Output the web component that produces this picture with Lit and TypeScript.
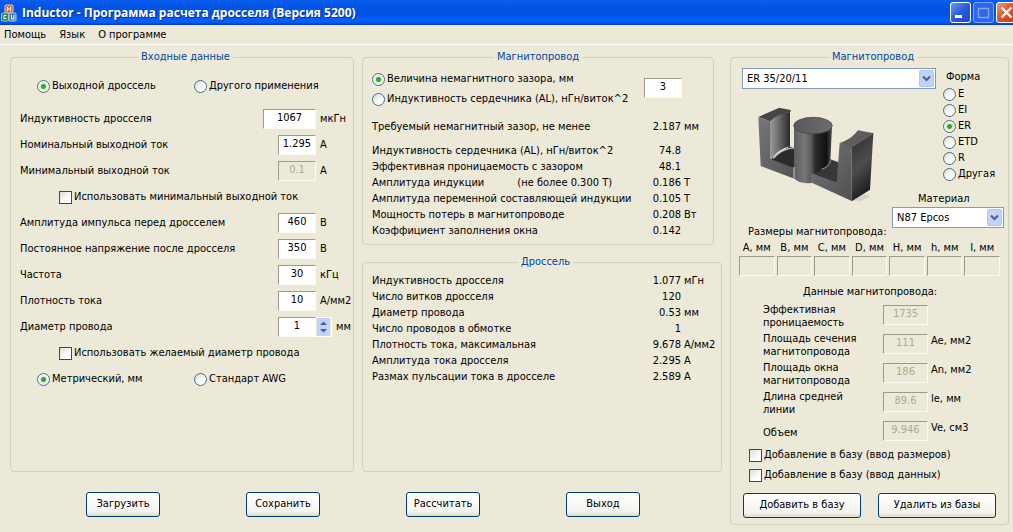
import { LitElement, html, css, svg, nothing } from 'lit';
import { customElement } from 'lit/decorators.js';

interface Field {
  id: string;
  label: string;
  value: string;
  unit: string;
  wide?: boolean;
  disabled?: boolean;
}

const pulseFields: Field[] = [
  { id: 'pulse', label: 'Амплитуда импульса перед дросселем', value: '460', unit: 'В' },
  { id: 'dc', label: 'Постоянное напряжение после дросселя', value: '350', unit: 'В' },
  { id: 'freq', label: 'Частота', value: '30', unit: 'кГц' },
  { id: 'density', label: 'Плотность тока', value: '10', unit: 'А/мм2' },
];

const currentFields: Field[] = [
  { id: 'ind', label: 'Индуктивность дросселя', value: '1067', unit: 'мкГн', wide: true },
  { id: 'nom', label: 'Номинальный выходной ток', value: '1.295', unit: 'А' },
  { id: 'min', label: 'Минимальный выходной ток', value: '0.1', unit: 'А', disabled: true },
];

type Result = [label: string, value: string, unit: string, note?: string];

const coreResults: Result[] = [
  ['Индуктивность сердечника (AL), нГн/виток^2', '74.8', ''],
  ['Эффективная проницаемость с зазором', '48.1', ''],
  ['Амплитуда индукции', '0.186', 'Т', '(не более 0.300 Т)'],
  ['Амплитуда переменной составляющей индукции', '0.105', 'Т'],
  ['Мощность потерь в магнитопроводе', '0.208', 'Вт'],
  ['Коэффициент заполнения окна', '0.142', ''],
];

const chokeResults: Result[] = [
  ['Индуктивность дросселя', '1.077', 'мГн'],
  ['Число витков дросселя', '120', ''],
  ['Диаметр провода', '0.53', 'мм'],
  ['Число проводов в обмотке', '1', ''],
  ['Плотность тока, максимальная', '9.678', 'А/мм2'],
  ['Амплитуда тока дросселя', '2.295', 'А'],
  ['Размах пульсации тока в дросселе', '2.589', 'А'],
];

const shapes = ['E', 'EI', 'ER', 'ETD', 'R', 'Другая'];
const dimensions = ['A', 'B', 'C', 'D', 'H', 'h', 'I'];

const coreData: Field[] = [
  { id: 'perm', label: 'Эффективная проницаемость', value: '1735', unit: '' },
  { id: 'ae', label: 'Площадь сечения магнитопровода', value: '111', unit: 'Ae, мм2' },
  { id: 'an', label: 'Площадь окна магнитопровода', value: '186', unit: 'An, мм2' },
  { id: 'le', label: 'Длина средней линии', value: '89.6', unit: 'le, мм' },
  { id: 've', label: 'Объем', value: '9.946', unit: 'Ve, см3' },
];

const appIcon = svg`<svg class="app-icon" viewBox="0 0 16 18" aria-hidden="true">
  <rect x="4" y="1" width="8" height="8" rx="1" fill="#d9694c" stroke="#f3c3ae"/>
  <path d="M6.5 3v4M9.500 3v4M6.500 5h3" stroke="#fff" fill="none"/>
  <rect x="0.500" y="9" width="7" height="8" rx="1" fill="#2f8a55" stroke="#8fd0a5"/>
  <path d="M3 11v4M3 11.500h2.500M3 14.500h2.500" stroke="#e8fff0" fill="none"/>
  <rect x="8" y="9" width="7" height="8" rx="1" fill="#3d78b8" stroke="#a9cdec"/>
  <path d="M10.500 11v4h2.500v-4" stroke="#fff" fill="none"/>
</svg>`;

const ferrite = svg`<svg class="ferrite" viewBox="20 14 360 297" role="img" aria-label="ER">
  <defs>
    <linearGradient id="front" x1="0" y1="0" x2="1" y2="1">
      <stop offset="0" stop-color="#77777a"/><stop offset="1" stop-color="#505053"/>
    </linearGradient>
    <linearGradient id="inner" x1="0" y1="0" x2="1" y2="0">
      <stop offset="0" stop-color="#a2a2a3"/><stop offset="0.500" stop-color="#68686a"/><stop offset="1" stop-color="#29292b"/>
    </linearGradient>
    <linearGradient id="post" x1="0" y1="0" x2="1" y2="0">
      <stop offset="0" stop-color="#5e5e61"/><stop offset="0.280" stop-color="#77777a"/><stop offset="0.450" stop-color="#5a5a5d"/>
      <stop offset="0.560" stop-color="#2b2b2d"/><stop offset="0.850" stop-color="#101011"/><stop offset="1" stop-color="#4c4c4e"/>
    </linearGradient>
    <linearGradient id="side" x1="0" y1="0" x2="0.300" y2="1">
      <stop offset="0" stop-color="#2c2c2e"/><stop offset="0.550" stop-color="#4d4d50"/><stop offset="1" stop-color="#1c1c1e"/>
    </linearGradient>
    <linearGradient id="lid" x1="0" y1="0" x2="1" y2="0">
      <stop offset="0" stop-color="#58585b"/><stop offset="1" stop-color="#6e6e71"/>
    </linearGradient>
  </defs>
  <path d="M310 300l34-18 20 6-30 14z" fill="#d3d1c8"/>
  <path d="M66 175L122 138 140 150V212L66 180z" fill="#2b2b2d"/>
  <path d="M72 175Q96 146 134 142" fill="none" stroke="#b9b9b6" stroke-width="4"/>
  <path d="M58 58Q82 38 122 35V138Q88 146 66 176z" fill="url(#inner)"/>
  <path d="M27 50L90 22 124 29V35Q86 38 62 63z" fill="#454548"/>
  <path d="M27 50L62 63 64 176 136 204 143 238 34 197z" fill="url(#front)"/>
  <path d="M186 215L240 176 268 186V250L188 222z" fill="#38383a"/>
  <path d="M134 72V234Q150 252 186 248L188 222Q230 210 243 180L248 78z" fill="url(#post)"/>
  <path d="M216 207Q240 200 244 180" fill="none" stroke="#99999a" stroke-width="3"/>
  <ellipse cx="191" cy="76" rx="58" ry="25" fill="url(#lid)" stroke="#3c3c3f" stroke-width="2"/>
  <path d="M134 200v36" stroke="#c9c9c5" stroke-width="3"/>
  <path d="M271 128L307 140V302L184 246 187 219 262 247z" fill="url(#front)"/>
  <path d="M307 140L372 99 362 268 307 303z" fill="url(#side)"/>
  <path d="M271 128Q308 116 326 90L374 99 307 142z" fill="#5d5d60"/>
</svg>`;

const chevron = svg`<svg class="chevron" viewBox="0 0 15 17" aria-hidden="true">
  <rect x="0.500" y="0.500" width="14" height="16" rx="1" fill="#c1d2fb" stroke="#b2c6f5"/>
  <path d="M4 6.500l3.500 3.500L11 6.500" fill="none" stroke="#4d6185" stroke-width="2"/>
</svg>`;

@customElement('app-root')
export class AppRoot extends LitElement {
  static styles = css`
    :host {
      display: flex;
      flex-direction: column;
      min-height: 100vh;
      overflow: hidden;
      background: #ece9d8;
      color: #000;
      font: 11px/16px 'DejaVu Sans Condensed', Tahoma, 'DejaVu Sans', sans-serif;
    }
    * { box-sizing: border-box; }
    button, input, select { font: inherit; color: inherit; margin: 0; }

    .titlebar {
      display: flex;
      align-items: center;
      height: 25px;
      padding-left: 1px;
      background: linear-gradient(#0c5ff0 0, #0558e8 12%, #0150e2 55%, #0560fa 80%, #0455ea 92%, #0238b4 100%);
      color: #fff;
    }
    .app-icon { width: 16px; height: 18px; }
    h1 {
      flex: 1;
      margin: 0 0 0 5px;
      font: bold 12px/20px 'Open Sans', 'Trebuchet MS', sans-serif;
      text-shadow: 1px 1px #0a2f8a;
      white-space: nowrap;
    }
    .window-buttons { display: flex; gap: 2px; margin-right: -4px; }
    .window-buttons button {
      width: 21px;
      height: 21px;
      padding: 0;
      border: 1px solid #fff;
      border-radius: 3px;
      background: linear-gradient(135deg, #6c97f4, #2a5bdd 50%, #1c4bc8);
    }
    .window-buttons .maximize { border-color: #7da2f0; background: #2d66e6; }
    .window-buttons .close { background: linear-gradient(135deg, #f0987c, #dc5132 50%, #c43c18); }
    .window-buttons svg { display: block; width: 19px; height: 19px; }

    .menu {
      display: flex;
      gap: 13px;
      height: 20px;
      padding: 1px 4px;
      border-bottom: 1px solid #fff;
    }
    .menu button { padding: 0; border: 0; background: none; line-height: 17px; }

    .body {
      flex: 1;
      display: grid;
      grid-template-columns: 344fr 360fr 279fr;
      grid-template-rows: 1fr auto;
      column-gap: 8px;
      padding: 5px 4px 7px 10px;
    }
    .results { display: flex; flex-direction: column; gap: 10px; }
    .results .core { margin-right: 8px; }
    .results .choke { flex: 1; }
    .magnet { grid-column: 3; grid-row: 1 / 3; }

    fieldset {
      min-width: 0;
      margin: 0;
      padding: 0 9px;
      border: 1px solid #d0d0bf;
      border-radius: 4px;
    }
    legend {
      margin: 0 auto;
      padding: 0 3px;
      line-height: 14px;
      color: #0046a0;
    }

    label, .unit { white-space: nowrap; }
    .choice { display: flex; align-items: center; gap: 2px; }
    input[type='radio'], input[type='checkbox'] {
      appearance: none;
      flex: none;
      width: 13px;
      height: 13px;
      border: 1px solid #1c5180;
      background: linear-gradient(135deg, #dcdcd7, #fff 70%);
    }
    input[type='radio'] { border-radius: 50%; border-color: #4c6a8c; }
    input[type='radio']:checked {
      background: radial-gradient(circle, #2fa82c 0 2px, #d9ecd4 3px, #f6f8f2 5px);
    }
    .text {
      width: 38px;
      height: 20px;
      padding: 0 0 3px;
      border: 1px solid;
      border-color: #9d9a8c #fbfaf5 #fbfaf5 #9d9a8c;
      border-radius: 0;
      background: #fff;
      text-align: center;
    }
    .text.wide { width: 53px; }
    .text:disabled { background: #ece9d8; color: #aca899; }

    .inputs { padding: 0 2px 0 9px; }
    .row { display: flex; align-items: center; height: 26px; }
    .row > label:first-child { flex: 1; }
    .row .unit { width: 35px; padding-left: 4px; }
    .pair { display: grid; grid-template-columns: 157px 1fr; align-items: center; height: 26px; padding-left: 17px; }
    .pair.first { margin: 9px 0 7px; }
    .indent { height: 26px; padding-left: 39px; }
    .spin { display: flex; }
    .spin button {
      width: 16px;
      height: 20px;
      padding: 0;
      border: 1px solid #fff;
      border-left: 0;
      background: none;
    }
    .spin svg { display: block; width: 15px; height: 18px; }
    .row .spin + .unit { width: 19px; }

    .gap-choice { display: flex; justify-content: space-between; align-items: center; padding-right: 22px; }
    .gap-choice .choice { height: 20px; }
    .gap-choice .text { margin-bottom: 2px; }
    .core .gap-choice { padding-top: 5px; }
    table { width: 100%; border-collapse: collapse; }
    th, td { padding: 0; font-weight: normal; text-align: left; white-space: nowrap; }
    td.value { text-align: right; }
    td.unit { width: 23px; padding-left: 3px; }
    .choke td.unit { width: 38px; }
    .choke { padding-right: 2px; }
    .required { margin: 10px 0 8px; }
    .core .last { margin-bottom: 5px; }
    .choke table { margin-top: 4px; }
    .note { margin-left: 33px; }

    .actions {
      grid-column: 1 / 3;
      display: flex;
      justify-content: space-between;
      padding: 20px 82px 8px 76px;
    }
    .push {
      width: 74px;
      height: 25px;
      padding: 0 0 1px;
      border: 1px solid #003c74;
      border-radius: 3px;
      background: linear-gradient(#fff, #f4f3ee 80%, #dedacb);
      white-space: nowrap;
    }

    .magnet { padding: 0 4px 0 11px; }
    .selector {
      display: grid;
      grid-template-columns: 1fr 51px 61px;
      grid-template-rows: auto 1fr auto;
      padding-top: 4px;
    }
    .combo { display: grid; align-items: center; }
    .combo select, .combo .chevron { grid-area: 1 / 1; }
    .combo select {
      appearance: none;
      width: 100%;
      height: 21px;
      padding: 0 20px 0 4px;
      border: 1px solid #7f9db9;
      border-radius: 0;
      background: #fff;
    }
    .combo .chevron { justify-self: end; width: 15px; height: 17px; margin-right: 2px; pointer-events: none; }
    .core-type { grid-column: 1 / 3; margin-right: 7px; }
    .shape { grid-column: 3; grid-row: 1 / 3; }
    .shape .title { padding-left: 3px; line-height: 18px; }
    .shape .choice { height: 16px; }
    .picture { grid-column: 1; grid-row: 2 / 4; padding: 16px 0 0 14px; }
    .ferrite { display: block; width: 120px; height: 99px; }
    .material { grid-column: 2 / 4; grid-row: 3; padding: 8px 0 12px; }
    .material label { display: block; padding-left: 26px; line-height: 17px; }
    .sizes-title { grid-column: 1; grid-row: 3; align-self: end; padding-left: 6px; white-space: nowrap; }

    .sizes { display: grid; grid-template-columns: repeat(7, 1fr); column-gap: 2px; margin: 0 4px 0 -3px; text-align: center; }
    .sizes .text { display: block; width: 100%; }
    .data-title { margin: 8px 0 3px; padding-left: 61px; }
    .data-list { display: grid; row-gap: 3px; padding-left: 21px; }
    .data { display: flex; height: 26px; }
    .data label {
      display: flex;
      align-items: center;
      width: 100px;
      margin-right: 20px;
      line-height: 13px;
      white-space: normal;
    }
    .data .text { width: 45px; margin-top: 2px; }
    .data .unit { padding: 1px 0 0 3px; }
    .adds { padding-left: 7px; }
    .adds .choice { height: 20px; }
    .base { display: flex; justify-content: space-between; padding: 8px 8px 6px 1px; }
    .base .push { width: 118px; }
  `;

  private radio(group: string, label: string, checked = false) {
    return html`<label class="choice"><input type="radio" name=${group} .checked=${checked} />${label}</label>`;
  }

  private check(label: string, cls = '') {
    return html`<label class="choice ${cls}"><input type="checkbox" />${label}</label>`;
  }

  private field(f: Field) {
    return html`<div class="row">
      <label for=${f.id}>${f.label}</label>
      <input class="text ${f.wide ? 'wide' : ''}" id=${f.id} .value=${f.value} ?disabled=${f.disabled} />
      <span class="unit">${f.unit}</span>
    </div>`;
  }

  private table(rows: Result[], cls = '') {
    return html`<table class=${cls}>
      <tbody>
        ${rows.map(([label, value, unit, note]) => html`<tr>
          <th scope="row">${label}${note ? html`<span class="note">${note}</span>` : nothing}</th>
          <td class="value">${value}</td>
          <td class="unit">${unit}</td>
        </tr>`)}
      </tbody>
    </table>`;
  }

  render() {
    return html`
      <header class="titlebar">
        ${appIcon}
        <h1>Inductor - Программа расчета дросселя (Версия 5200)</h1>
        <div class="window-buttons">
          <button aria-label="Свернуть"><svg viewBox="0 0 19 19"><path d="M4 13.500h7" stroke="#fff" stroke-width="3" /></svg></button>
          <button class="maximize" aria-label="Развернуть"><svg viewBox="0 0 19 19"><path d="M4.500 5v9.500h10V5M4 5.500h11" fill="none" stroke="#7da2f0" stroke-width="1.500" /></svg></button>
          <button class="close" aria-label="Закрыть"><svg viewBox="0 0 19 19"><path d="M4.500 4.500l10 10M14.500 4.500l-10 10" stroke="#fff" stroke-width="2.400" /></svg></button>
        </div>
      </header>
      <nav class="menu">
        <button>Помощь</button><button>Язык</button><button>О программе</button>
      </nav>
      <main class="body">
        <fieldset class="inputs">
          <legend>Входные данные</legend>
          <div class="pair first">
            ${this.radio('use', 'Выходной дроссель', true)} ${this.radio('use', 'Другого применения')}
          </div>
          ${currentFields.map((f) => this.field(f))}
          ${this.check('Использовать минимальный выходной ток', 'indent')}
          ${pulseFields.map((f) => this.field(f))}
          <div class="row">
            <label for="wire">Диаметр провода</label>
            <span class="spin">
              <input class="text" id="wire" value="1" />
              <button aria-label="Изменить диаметр">
                <svg viewBox="0 0 15 18">
                  <rect x="1" y="0" width="13" height="18" rx="1" fill="#c1d2fb" />
                  <path d="M4 7l3.500-3.500L11 7zM4 11l3.500 3.500L11 11z" fill="#4d6185" />
                </svg>
              </button>
            </span>
            <span class="unit">мм</span>
          </div>
          ${this.check('Использовать желаемый диаметр провода', 'indent')}
          <div class="pair">
            ${this.radio('wire-std', 'Метрический, мм', true)} ${this.radio('wire-std', 'Стандарт AWG')}
          </div>
        </fieldset>

        <div class="results">
          <fieldset class="core">
            <legend>Магнитопровод</legend>
            <div class="gap-choice">
              <div>
                ${this.radio('gap', 'Величина немагнитного зазора, мм', true)}
                ${this.radio('gap', 'Индуктивность сердечника (AL), нГн/виток^2')}
              </div>
              <input class="text" value="3" aria-label="Зазор" />
            </div>
            ${this.table([['Требуемый немагнитный зазор, не менее', '2.187', 'мм']], 'required')}
            ${this.table(coreResults, 'last')}
          </fieldset>
          <fieldset class="choke">
            <legend>Дроссель</legend>
            ${this.table(chokeResults)}
          </fieldset>
        </div>

        <fieldset class="magnet">
          <legend>Магнитопровод</legend>
          <div class="selector">
            <div class="combo core-type">
              <select aria-label="Магнитопровод"><option>ER 35/20/11</option></select>
              ${chevron}
            </div>
            <div class="picture">${ferrite}</div>
            <div class="shape" role="radiogroup" aria-label="Форма">
              <div class="title">Форма</div>
              ${shapes.map((s) => this.radio('shape', s, s === 'ER'))}
            </div>
            <div class="sizes-title">Размеры магнитопровода:</div>
            <div class="material">
              <label for="material">Материал</label>
              <div class="combo">
                <select id="material"><option>N87 Epcos</option></select>
                ${chevron}
              </div>
            </div>
          </div>
          <div class="sizes">
            ${dimensions.map((d) => html`<label>${d}, мм<input class="text" disabled /></label>`)}
          </div>
          <div class="data-title">Данные магнитопровода:</div>
          <div class="data-list">
            ${coreData.map((f) => html`<div class="data">
              <label for=${f.id}>${f.label}</label>
              <input class="text" id=${f.id} .value=${f.value} disabled />
              <span class="unit">${f.unit}</span>
            </div>`)}
          </div>
          <div class="adds">
            ${this.check('Добавление в базу (ввод размеров)')} ${this.check('Добавление в базу (ввод данных)')}
          </div>
          <div class="base">
            <button class="push">Добавить в базу</button>
            <button class="push">Удалить из базы</button>
          </div>
        </fieldset>

        <div class="actions">
          <button class="push">Загрузить</button>
          <button class="push">Сохранить</button>
          <button class="push">Рассчитать</button>
          <button class="push">Выход</button>
        </div>
      </main>
    `;
  }
}
